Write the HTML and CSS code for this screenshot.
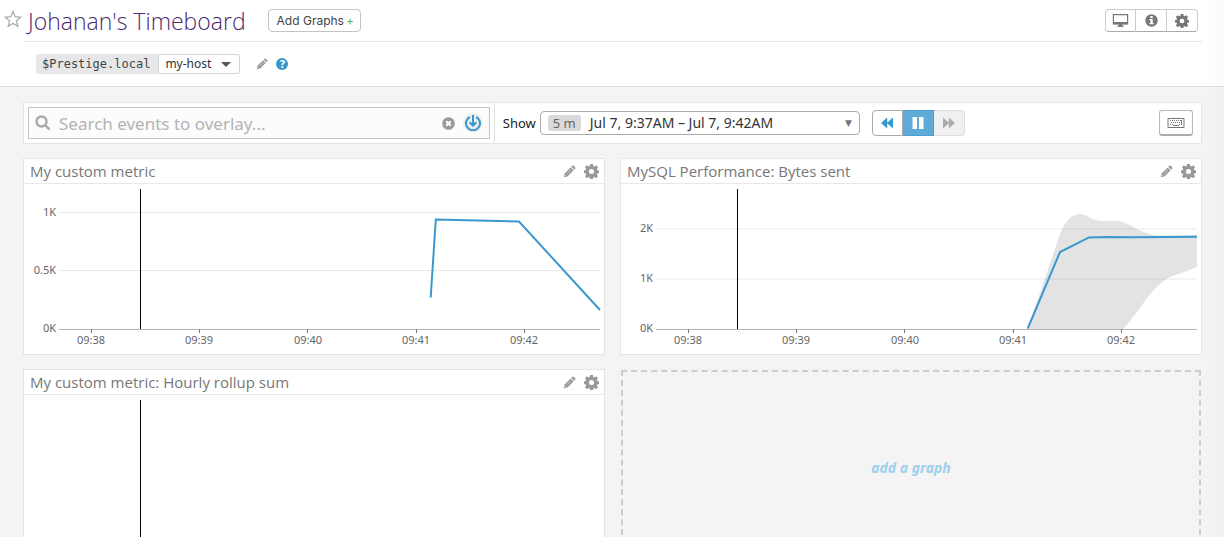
FILE: index.html
```html
<!DOCTYPE html>
<html lang="en">
<head>
<meta charset="utf-8">
<title>Johanan's Timeboard</title>
<meta name="viewport" content="width=device-width, initial-scale=1">
<link rel="stylesheet" href="styles.css">
</head>
<body>
<svg class="sprite" aria-hidden="true">
  <symbol id="pencil" viewBox="0 0 16 16">
    <path d="M1 15 2 10.400 9.400 3 13 6.600 5.600 14Z"/>
    <path d="M10.200 2.200 11.400 1Q12.300.3 13.200 1L15 2.800Q15.700 3.700 15 4.600L13.800 5.800Z"/>
    <path d="M5 10.600 9.800 5.800" stroke="#fff" stroke-width=".6"/>
    <path d="M2.200 12.200 3.800 13.800" stroke="#fff" stroke-width=".8"/>
  </symbol>
  <symbol id="gear" viewBox="0 0 16 16">
    <path fill-rule="evenodd" d="M6.500 0h3l.4 2.200 1.200.5 1.800-1.300 2.100 2.100-1.300 1.800.5 1.200 1.800.3v2.800l-1.800.4-.5 1.200 1.300 1.800-2.100 2.100-1.800-1.300-1.200.5-.4 1.700h-3l-.4-1.700-1.200-.5-1.800 1.300-2.100-2.100 1.300-1.800-.5-1.200L0 9.600V6.800l1.800-.3.5-1.200L1 3.500l2.100-2.100 1.800 1.300 1.200-.5zM8 5.300a2.700 2.700 0 1 0 0 5.400 2.700 2.700 0 0 0 0-5.400z"/>
  </symbol>
  <symbol id="rewind" viewBox="0 0 12 12">
    <path d="M6.200 .5V11.500L0 6zM12 .5V11.500L5.800 6z"/>
  </symbol>
</svg>

<header class="header">
  <button class="star" aria-label="Favorite">
    <svg viewBox="0 0 18 18"><path d="M9 1.500 11.200 6.700 16.700 7.200 12.500 10.800 13.800 16.300 9 13.400 4.200 16.300 5.500 10.800 1.300 7.200 6.800 6.700Z"/></svg>
  </button>
  <div class="header-main">
    <div class="title-row">
      <h1 class="title">Johanan's Timeboard</h1>
      <button class="add-graphs">Add Graphs<span class="plus">+</span></button>
      <div class="btn-group actions">
        <button aria-label="TV mode"><svg width="17" height="16" viewBox="0 0 17 16"><path fill="none" stroke="currentColor" stroke-width="1.200" d="M1.400 1.600h14.200v9H1.400z"/><path d="M1 9h15v2.500H1zM7 11h3v2H7zM5.500 12.500h6V14h-6z"/></svg></button>
        <button aria-label="Info"><svg width="13" height="13" viewBox="0 0 13 13"><circle cx="6.500" cy="6.500" r="6.200"/><path fill="#fff" d="M5.300 2h2.400v2H5.300zM4.500 5h3.200v4h.9v1.300H4.500V9h.9V6.300h-.9z"/></svg></button>
        <button aria-label="Settings"><svg width="14" height="14"><use href="#gear"/></svg></button>
      </div>
    </div>
    <div class="vars-row">
      <label class="var-name" for="host">$Prestige.local</label>
      <span class="var-select"><select id="host"><option>my-host</option></select></span>
      <button class="icon-btn edit-vars" aria-label="Edit variables"><svg width="12" height="12"><use href="#pencil"/></svg></button>
      <a class="help" href="#help" aria-label="Help">?</a>
    </div>
  </div>
</header>

<main class="board">
  <div class="toolbar">
    <div class="search-wrap">
      <div class="search">
        <svg class="search-icon" width="16" height="16" viewBox="0 0 16 16"><circle cx="6.500" cy="6.500" r="5"/><path d="M10.200 10.200 14.600 14.600"/></svg>
        <input type="text" aria-label="Search events" placeholder="Search events to overlay...">
        <button class="icon-btn clear" aria-label="Clear"><svg width="13" height="13" viewBox="0 0 13 13"><circle cx="6.500" cy="6.500" r="6.300"/><path stroke="#fff" stroke-width="2" d="M4.200 4.200 8.800 8.800M8.800 4.200 4.200 8.800"/></svg></button>
        <button class="load" aria-label="Load events"><svg width="16" height="16" viewBox="0 0 16 16"><path d="M4.800 2A7 7 0 1 0 11.200 2M8 0V10M4.600 7.200 8 10.600 11.400 7.200"/></svg></button>
      </div>
    </div>
    <div class="time">
      <span class="show">Show</span>
      <button class="range" aria-haspopup="listbox"><span class="span-badge">5 m</span><span class="dates">Jul 7, 9:37AM – Jul 7, 9:42AM</span><span class="caret">▼</span></button>
      <div class="btn-group playback">
        <button class="back" aria-label="Back"><svg width="12" height="12"><use href="#rewind"/></svg></button>
        <button class="pause" aria-label="Pause"><svg width="12" height="12" viewBox="0 0 12 12"><path d="M.5 0H5v12H.5zM7 0h4.500v12H7z"/></svg></button>
        <button class="forward" aria-label="Forward" disabled><svg class="flip" width="12" height="12"><use href="#rewind"/></svg></button>
      </div>
      <button class="keyboard" aria-label="Keyboard shortcuts"><svg width="18" height="12" viewBox="0 0 18 12"><path fill="none" stroke="currentColor" d="M1 1.500h16v9H1z"/><path fill="none" stroke="currentColor" stroke-dasharray="1 1" d="M3 3.500h12M4 5.500h11M3 7.500h3M12 7.500h3"/><path stroke="currentColor" d="M6 8.500h6M14.500 3v4"/></svg></button>
    </div>
  </div>

  <div class="grid">
    <section class="panel">
      <div class="panel-head">
        <h2>My custom metric</h2>
        <button class="icon-btn" aria-label="Edit"><svg width="13" height="13"><use href="#pencil"/></svg></button>
        <button class="icon-btn" aria-label="Settings"><svg width="15" height="15"><use href="#gear"/></svg></button>
      </div>
      <svg class="chart" viewBox="0 0 580 170" role="img" aria-label="My custom metric">
        <path class="gridline" d="M35 28.500H576M35 86.500H576"/>
        <path class="axis" d="M35 145.500H576"/>
        <path class="tick" d="M67.500 145v4M175.500 145v4M283.500 145v4M392.500 145v4M500.500 145v4"/>
        <g class="ylabels"><text x="32" y="32">1K</text><text x="32" y="90">0.5K</text><text x="32" y="148">0K</text></g>
        <g class="xlabels"><text x="67" y="160">09:38</text><text x="175" y="160">09:39</text><text x="284" y="160">09:40</text><text x="392" y="160">09:41</text><text x="500" y="160">09:42</text></g>
        <path class="series" d="M406.700 113.500 411.800 35.500 495 37.500 576 126"/>
        <path class="cursor" d="M116.500 5V145"/>
      </svg>
    </section>

    <section class="panel">
      <div class="panel-head">
        <h2>MySQL Performance: Bytes sent</h2>
        <button class="icon-btn" aria-label="Edit"><svg width="13" height="13"><use href="#pencil"/></svg></button>
        <button class="icon-btn" aria-label="Settings"><svg width="15" height="15"><use href="#gear"/></svg></button>
      </div>
      <svg class="chart" viewBox="0 0 580 170" role="img" aria-label="MySQL Performance: Bytes sent">
        <path class="gridline soft" d="M35 45H576M35 95H576"/>
        <path class="band" d="M406.700 145 437.300 55C443 39 449 30 459 30C466 30 467 34 473 35.500C482 38 490 36.500 497 37C507 38 513 45 524 48.500C531 51 535 51.500 543 51.500L576 51V83.300L549 93C529 104 523 122 502.300 145Z"/>
        <path class="axis" d="M35 145.500H576"/>
        <path class="tick" d="M67.500 145v4M175.500 145v4M283.500 145v4M392.500 145v4M500.500 145v4"/>
        <g class="ylabels"><text x="32" y="48">2K</text><text x="32" y="98">1K</text><text x="32" y="148">0K</text></g>
        <g class="xlabels"><text x="67" y="160">09:38</text><text x="175" y="160">09:39</text><text x="284" y="160">09:40</text><text x="392" y="160">09:41</text><text x="500" y="160">09:42</text></g>
        <path class="series" d="M406.700 144.500 439 68 468 53.400 486 53 513 53.300 576 52.700"/>
        <path class="cursor" d="M116.500 5V145"/>
      </svg>
    </section>

    <section class="panel">
      <div class="panel-head">
        <h2>My custom metric: Hourly rollup sum</h2>
        <button class="icon-btn" aria-label="Edit"><svg width="13" height="13"><use href="#pencil"/></svg></button>
        <button class="icon-btn" aria-label="Settings"><svg width="15" height="15"><use href="#gear"/></svg></button>
      </div>
      <svg class="chart" viewBox="0 0 580 170" role="img" aria-label="My custom metric: Hourly rollup sum">
        <path class="cursor" d="M116.500 5V145"/>
      </svg>
    </section>

    <button class="add-panel">add a graph</button>
  </div>
</main>
</body>
</html>
```

FILE: styles.css
```css
* { box-sizing: border-box; }

html, body { height: 100%; }

body {
  margin: 0;
  overflow: hidden;
  background: #f4f4f4;
  color: #333;
  font-family: "Noto Sans", "Open Sans", sans-serif;
  font-size: 13px;
}

/* Faint shade along the right edge of the window */
body::after {
  content: "";
  position: fixed;
  top: 0;
  right: 0;
  bottom: 0;
  width: 16px;
  background: linear-gradient(to right, transparent, rgba(0, 0, 0, .015));
  pointer-events: none;
}

button, input, select { font: inherit; color: inherit; margin: 0; }
button { padding: 0; cursor: pointer; }
svg { display: block; fill: currentColor; }

.sprite { position: absolute; width: 0; height: 0; }

.header {
  display: flex;
  align-items: flex-start;
  padding: 0 22px 0 4px;
  background: #fff;
  border-bottom: 1px solid #ddd;
}
.star { width: 20px; padding-top: 10px; border: 0; background: none; color: #aaa; }
.star svg { width: 18px; height: 18px; fill: none; stroke: currentColor; stroke-width: 1.2; }
.header-main { flex: 1; }
.title-row {
  display: flex;
  align-items: center;
  height: 42px;
  padding: 0 4px;
  border-bottom: 1px solid #e5e5e5;
}
.title {
  margin: 0 22px 0 0;
  color: #4b2a70;
  font: 300 23px/36px "Open Sans", sans-serif;
}
.add-graphs {
  display: flex;
  align-items: center;
  gap: 2px;
  height: 23px;
  padding: 0 6px 0 8px;
  border: 1px solid #c4c4c4;
  border-radius: 4px;
  background: #fff;
  color: #444;
  font: 12px "Inter", sans-serif;
}
.plus { color: #5cb82c; }

.btn-group { display: flex; }
.btn-group button {
  display: grid;
  place-items: center;
  width: 31px;
  border: 1px solid #ccc;
  background: #fff;
}
.btn-group button + button { border-left: 0; }
.btn-group button:first-child { border-radius: 4px 0 0 4px; }
.btn-group button:last-child { border-radius: 0 4px 4px 0; }
.actions { margin-left: auto; color: #777; }
.actions button { height: 23px; border-bottom-color: #aaa; }

.vars-row { display: flex; align-items: center; height: 44px; padding-left: 12px; }
.var-name {
  height: 20px;
  padding: 0 8px 0 6px;
  border-radius: 2px 0 0 2px;
  background: #e7e7e9;
  color: #444;
  font: 12px/20px "DejaVu Sans Mono", monospace;
}
.var-select { position: relative; }
.var-select::after {
  content: "";
  position: absolute;
  top: 8px;
  right: 9px;
  border: 5px solid transparent;
  border-top-color: #555;
  border-bottom: 0;
  pointer-events: none;
}
.var-select select {
  display: block;
  width: 82px;
  height: 20px;
  padding: 0 6px;
  border: 1px solid #d8d8dc;
  border-radius: 0 2px 2px 0;
  background: #fff;
  appearance: none;
  font-size: 12px;
  line-height: 18px;
}

.icon-btn { border: 0; background: none; color: #999; }
.edit-vars { margin-left: 16px; }
.help {
  width: 12px;
  height: 12px;
  margin-left: 8px;
  border-radius: 50%;
  background: #3598cc;
  color: #fff;
  font-size: 10px;
  font-weight: 800;
  line-height: 12px;
  text-align: center;
  text-decoration: none;
}

.board { padding: 15px 22px 15px 23px; }
.toolbar {
  display: flex;
  height: 42px;
  margin-bottom: 14px;
  border: 1px solid #e5e5e5;
  background: #fff;
}
.search-wrap { width: 40%; padding: 4px; border-right: 1px solid #e0e0e0; }
.search {
  display: flex;
  align-items: center;
  height: 32px;
  padding: 0 6px;
  border: 1px solid #c4c4c4;
  background: #fcfcfc;
}
.search-icon { fill: none; stroke: #aaa; stroke-width: 2.4; }
.search input {
  flex: 1;
  min-width: 0;
  height: 28px;
  padding: 0 8px;
  border: 0;
  background: none;
  font-size: 17px;
}
.search input::placeholder { color: #b3b3b3; }
.load {
  display: grid;
  place-items: center;
  width: 20px;
  height: 20px;
  margin-left: 8px;
  border: 0;
  border-radius: 50%;
  background: #eee;
  color: #3598d0;
}
.load svg { fill: none; stroke: currentColor; stroke-width: 2; }
.time { display: flex; flex: 1; align-items: center; padding: 0 8px; }
.show { margin-right: 4px; color: #222; }
.range {
  display: flex;
  align-items: center;
  width: 320px;
  height: 24px;
  padding: 0 7px;
  border: 1px solid #aaa;
  border-radius: 4px;
  background: #fff;
}
.span-badge {
  padding: 0 5px;
  margin-right: 9px;
  border-radius: 3px;
  background: #d9d9d9;
  color: #666;
  line-height: 16px;
}
.dates { font-size: 14px; line-height: 20px; }
.caret { margin-left: auto; color: #777; font: 9px "DejaVu Sans", sans-serif; }
.playback { margin-left: 12px; }
.playback button { height: 26px; border-color: #aaa; }
.playback .back { color: #3598cc; }
.playback .pause { border-color: #4a9fcc; background: #5dabd6; color: #fff; }
.playback .forward { border-color: #ddd; background: #f0f0f0; color: #aaa; }
.flip { transform: scaleX(-1); }
.keyboard {
  display: grid;
  place-items: center;
  width: 34px;
  height: 26px;
  margin-left: auto;
  border: 1px solid #bbb;
  border-bottom: 2px solid #aaa;
  border-radius: 3px;
  background: #fff;
  color: #777;
}

.grid { display: grid; grid-template-columns: 1fr 1fr; gap: 14px 15px; }
.panel { border: 1px solid #e5e5e5; background: #fff; }
.panel-head {
  display: flex;
  align-items: center;
  gap: 8px;
  height: 25px;
  padding: 0 5px 0 6px;
  border-bottom: 1px solid #e8e8e8;
}
.panel-head h2 {
  flex: 1;
  margin: 0;
  color: #777;
  font: 400 15px/24px "Open Sans", sans-serif;
}
.chart { width: 100%; height: auto; }
.chart text { fill: #666; font-size: 11px; }
.chart path { fill: none; }
.ylabels { text-anchor: end; }
.xlabels { text-anchor: middle; }
.chart .gridline { stroke: #e8e8e8; }
.chart .soft { stroke: #f5f5f5; stroke-width: 2; }
.chart .axis { stroke: #b4b4b4; }
.chart .tick { stroke: #777; }
.chart .band { fill: #000; fill-opacity: .11; }
.chart .series { stroke: #3b98cf; stroke-width: 2; }
.chart .cursor { stroke: #000; }

.add-panel {
  margin: 1px;
  border: 2px dashed #ccc;
  background: none;
  color: #9dd0ec;
  font-size: 14px;
  font-style: italic;
  font-weight: 700;
}
```
